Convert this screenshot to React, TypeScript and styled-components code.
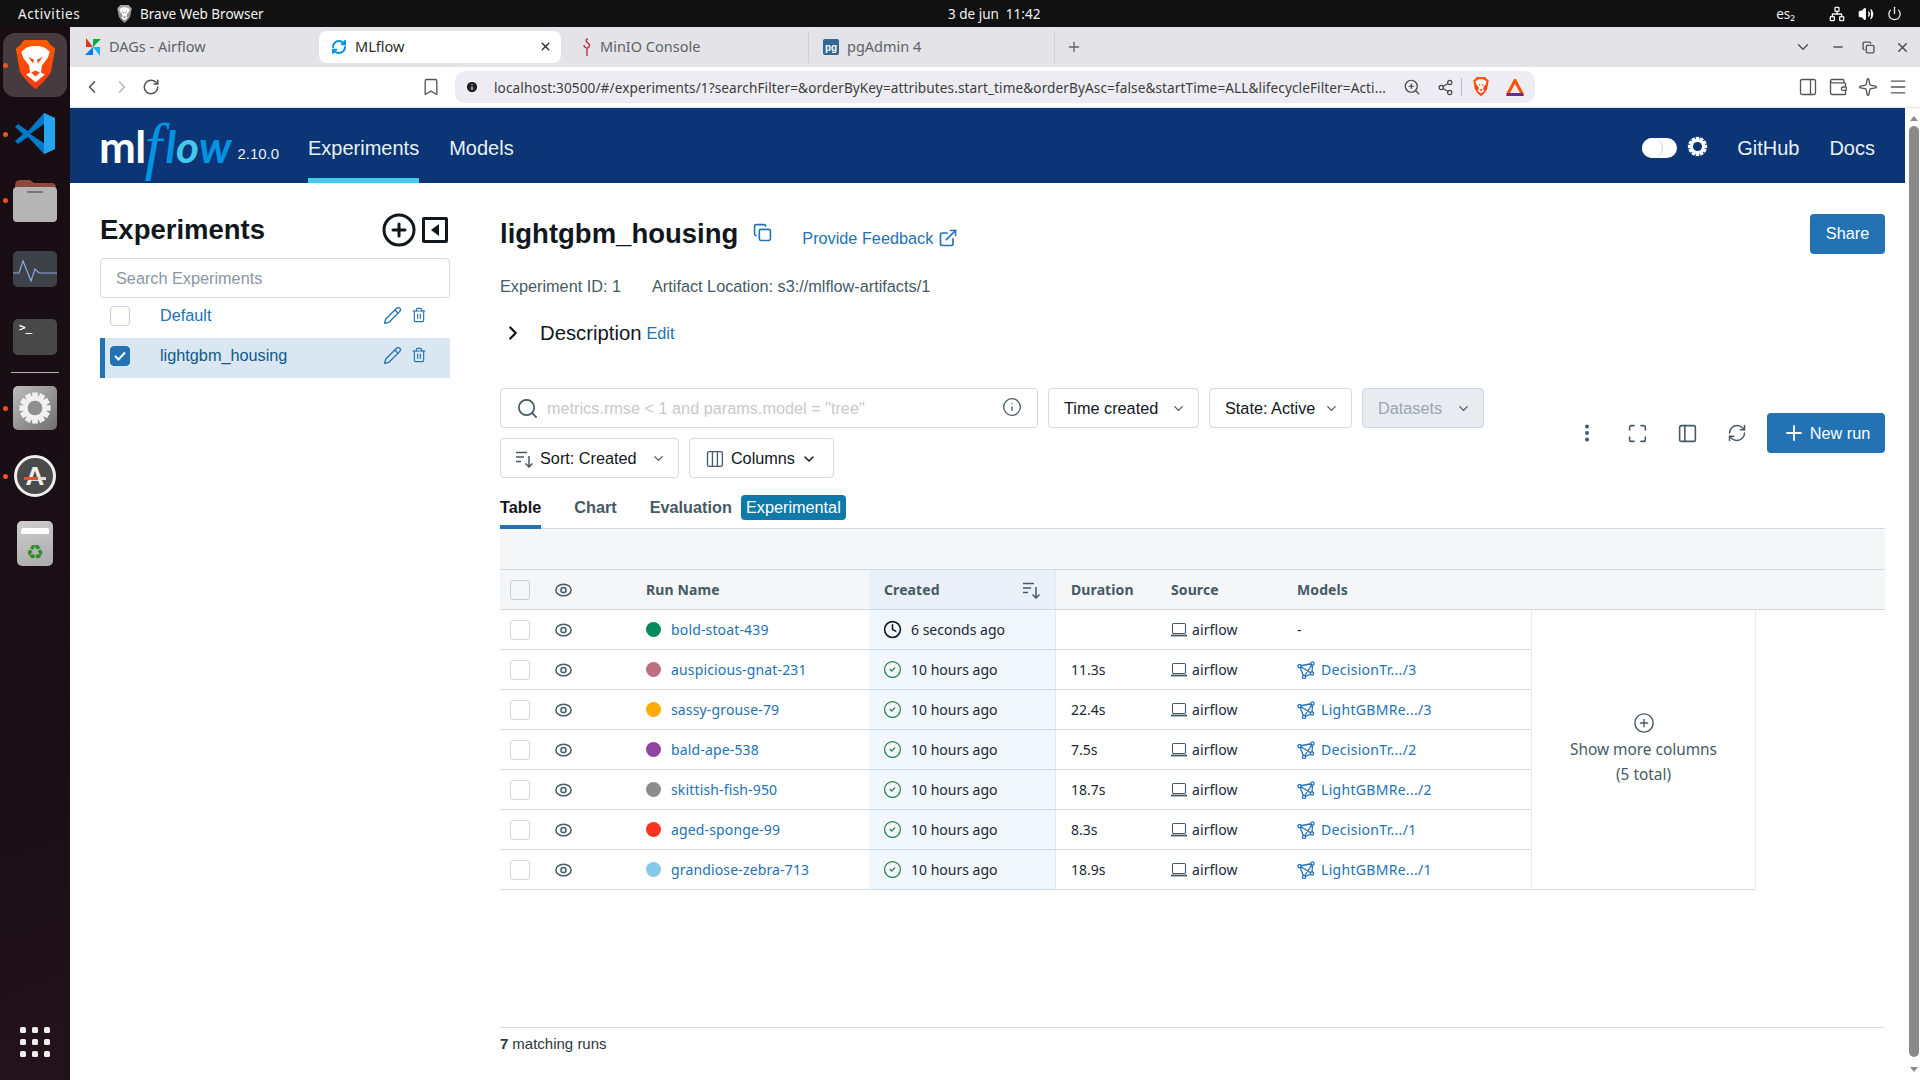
import React from 'react';
import styled, { createGlobalStyle } from 'styled-components';
import {
  ChevronLeft, ChevronRight, RotateCw, Bookmark, Search, Info, ChevronDown, Columns3, Clock, CircleCheck,
  Pencil, Trash2, CirclePlus, Maximize, PanelLeft, RefreshCw, Plus, EllipsisVertical, ExternalLink,
  Copy, ZoomIn, Share2, Menu, Wallet, Sparkle, PanelRight, Minus, X, Network, Volume2, Power,
} from 'lucide-react';

const UI = '"Liberation Sans", Arial, sans-serif';
const SHELL = '"Noto Sans", "Open Sans", sans-serif';

const Global = createGlobalStyle`
  html, body { margin: 0; padding: 0; background: #fff; overflow: hidden; }
  * { box-sizing: border-box; }
`;

const Screen = styled.div`
  width: 1920px; height: 1080px; display: flex; flex-direction: column; overflow: hidden; font-family: ${UI};
`;
const TopBar = styled.div`
  height: 27px; flex: none; background: #111; color: #f1f1f1; display: flex; align-items: center;
  font: 13.5px ${SHELL};
`;
const TopLeft = styled.div`width: 948px; display: flex; align-items: center; padding-left: 18px;`;
const Activities = styled.span`width: 99px; letter-spacing: 0.6px;`;
const AppName = styled.span`margin-left: 8px;`;
const TopRight = styled.div`margin-left: auto; display: flex; align-items: center; padding-right: 18px; svg { display: block; }`;
const Lang = styled.span`margin-right: 34px;`;
const TrayGap = styled.span`width: 13px;`;

const Desk = styled.div`flex: 1; display: flex; min-height: 0;`;
const Dock = styled.div`
  width: 70px; flex: none; display: flex; flex-direction: column; align-items: center; padding-top: 6px;
  background: linear-gradient(160deg, #170d13 0%, #1a0f15 70%, #24121b 100%);
`;
const DockSlot = styled.div<{ $mt: number; $h: number; $tile?: boolean; $dot?: boolean }>`
  position: relative; width: 64px; height: ${p => p.$h}px; margin-top: ${p => p.$mt}px;
  display: flex; align-items: center; justify-content: center; border-radius: 12px;
  background: ${p => (p.$tile ? '#463c40' : 'transparent')};
  &::before {
    content: ''; display: ${p => (p.$dot ? 'block' : 'none')}; position: absolute; left: 0; top: 50%;
    width: 5px; height: 5px; margin-top: -2px; border-radius: 50%; background: #e95420;
  }
`;
const DockSep = styled.div`width: 48px; height: 1px; background: #b8b4b6; margin-top: 17px;`;
const AppGrid = styled.div`
  margin-top: auto; margin-bottom: 23px; display: grid; grid-template-columns: repeat(3, 6px); gap: 6px;
  span { width: 6px; height: 6px; border-radius: 1.5px; background: #eee; }
`;
const TermTile = styled.div`
  width: 44px; height: 36px; border-radius: 5px; background: #484848; color: #fff; padding: 2px 0 0 6px;
  font: 700 11px "DejaVu Sans Mono", monospace;
`;

const Browser = styled.div`flex: 1; min-width: 0; display: flex; flex-direction: column;`;
const TabStrip = styled.div`height: 40px; flex: none; background: #e3e3e8; display: flex; align-items: center; color: #5f6368; font: 14.5px ${SHELL};`;
const TabGrid = styled.div`display: grid; grid-template-columns: 249px 242px 248px 246px;`;
const Tab = styled.div<{ $active?: boolean; $pad: number; $sep?: boolean }>`
  height: 32px; display: flex; align-items: center; padding-left: ${p => p.$pad}px; gap: 8px; position: relative;
  span { margin-top: -2px; }
  ${p => (p.$active ? 'background:#fff;border-radius:8px;color:#2b2b2b;' : '')}
  ${p => (p.$sep ? 'border-right:1px solid #cfcfd4;' : '')}
`;
const TabClose = styled.span`margin-left: auto; margin-right: 9px; display: flex; color: #333;`;
const PgIcon = styled.i`
  width: 16px; height: 16px; border-radius: 2px; background: #336791; color: #fff; font: 700 10px ${UI};
  display: flex; align-items: center; justify-content: center;
`;
const NewTab = styled.span`margin-left: 11px; display: flex; color: #666;`;
const WinButtons = styled.div`margin-left: auto; display: flex; align-items: center; color: #555; padding-right: 10px;`;
const WinBtn = styled.span<{ $ml: number }>`margin-left: ${p => p.$ml}px; display: flex;`;

const Toolbar = styled.div`
  height: 41px; flex: none; background: #fff; display: flex; align-items: center; padding-left: 12px;
  border-bottom: 1px solid #e4e4e4; color: #555;
  svg { display: block; }
`;
const IconGroup = styled.div<{ $ml?: number }>`display: flex; align-items: center; gap: 10px; margin-left: ${p => p.$ml ?? 0}px;`;
const UrlBox = styled.div`
  width: 1080px; height: 32px; margin-left: 14px; background: #edecf2; border-radius: 10px; display: flex; align-items: center;
  padding-left: 10px; color: #444;
`;
const UrlText = styled.span`
  width: 892px; margin-left: 15px; font: 13.6px ${SHELL}; color: #3c3c3c; white-space: nowrap; overflow: hidden; letter-spacing: 0.1px;
`;
const UrlIcon = styled.span<{ $ml: number }>`margin-left: ${p => p.$ml}px; display: flex;`;
const UrlSep = styled.span`width: 1px; height: 18px; background: #b9b9bd; margin-left: 7px;`;

const PageRow = styled.div`flex: 1; display: flex; min-height: 0;`;
const Content = styled.div`flex: 1; min-width: 0; display: flex; flex-direction: column;`;
const Header = styled.header`
  height: 75px; flex: none; background: #0b3574; display: flex; align-items: stretch; padding: 0 30px; color: #e6f1f5;
`;
const LogoBlock = styled.div`width: 208px; display: flex; align-items: center; color: #fff; margin-left: -1px; margin-right: 1px;`;
const LogoMl = styled.span`font: 700 44px Lato, sans-serif; letter-spacing: -0.6px; color: #fff; line-height: 1;`;
const LogoF = styled.span`font: italic 400 64px "Liberation Serif", serif; color: #0194e2; margin: 0 3px 0 -1px; line-height: 1;`;
const LogoRest = styled.span<{ $c: string }>`font: italic 700 44px Lato, sans-serif; color: ${p => p.$c}; line-height: 1;`;
const Version = styled.span`font: 15px ${UI}; margin: 15px 0 0 6px; color: #e8eef5;`;
const NavItem = styled.a<{ $active?: boolean }>`
  display: flex; align-items: center; font: 20px ${UI}; margin-right: 30px; padding-top: ${p => (p.$active ? '10px' : '5px')};
  border-bottom: ${p => (p.$active ? '5px solid #43c9ed' : 'none')};
`;
const HeaderRight = styled.div`margin-left: auto; display: flex; align-items: center; font: 20px ${UI}; padding-top: 5px;`;
const Toggle = styled.span`
  width: 35px; height: 20px; margin-top: -1px; border-radius: 10px; background: #fff; display: block; position: relative;
  &::after { content: ''; position: absolute; left: 0; top: 0; width: 20px; height: 20px; border-radius: 50%; background: #fff; border-right: 1px solid #c5d3e0; }
`;
const GearWrap = styled.span`display: flex; margin: -3px 29px 0 10px;`;
const HeaderLink = styled.a`margin-right: 30px; &:last-child { margin-right: 0; }`;

const Body = styled.div`flex: 1; min-height: 0; display: flex; padding: 31px 20px 0 30px;`;
const Sidebar = styled.aside`width: 350px; flex: none; margin-right: 50px;`;
const SideHead = styled.div`height: 32px; display: flex; align-items: center; color: #11171c;`;
const SideTitle = styled.h1`margin: 0; font: 700 27.5px ${UI};`;
const SideIcons = styled.div`margin-left: auto; margin-right: 2px; display: flex; align-items: center; gap: 5px;`;
const CollapseBox = styled.span`
  width: 26px; height: 26px; border: 3px solid #11171c; border-radius: 2px; display: flex; align-items: center; justify-content: center;
  &::after { content: ''; border: 6px solid transparent; border-left: 0; border-right: 8px solid #11171c; margin-left: -1px; }
`;
const SideSearch = styled.div`
  height: 40px; margin-top: 12px; border: 1px solid #d1d9e1; border-radius: 4px; display: flex; align-items: center; padding: 1px 0 0 15px;
  font: 16.25px ${UI}; color: #8a96a3;
`;
const ExpRow = styled.div<{ $sel?: boolean }>`
  height: 40px; display: flex; align-items: center; padding-left: ${p => (p.$sel ? '5px' : '10px')};
  ${p => (p.$sel ? 'background:#dae6f2;border-left:5px solid #2272b4;' : '')}
  color: ${p => (p.$sel ? '#0e5a8a' : '#2272b4')}; font: 16.25px ${UI};
`;
const SideCheck = styled.span<{ $on?: boolean }>`
  width: 20px; height: 20px; margin-top: -4px; border-radius: 4px; flex: none; display: flex; align-items: center; justify-content: center;
  border: 1px solid ${p => (p.$on ? '#2272b4' : '#c2ccd6')}; background: ${p => (p.$on ? '#2272b4' : '#fff')}; color: #fff;
`;
const ExpName = styled.span`margin-left: 30px; margin-top: -5px;`;
const ExpActions = styled.span`margin-left: auto; margin-right: 23px; margin-top: -6px; display: flex; align-items: center; gap: 9px; color: #2272b4;`;

const Main = styled.main`flex: 1; min-width: 0; display: flex; flex-direction: column;`;
const TitleRow = styled.div`height: 40px; display: flex; align-items: center;`;
const Title = styled.h2`margin: 0; font: 700 27.5px ${UI}; color: #11171c;`;
const CopyBtn = styled.span`margin: -4px 0 0 15px; color: #2272b4; display: flex;`;
const Feedback = styled.a`margin: 8px 0 0 30px; display: flex; align-items: center; gap: 5px; font: 16.25px ${UI}; color: #2272b4;`;
const ShareBtn = styled.button`
  margin-left: auto; width: 75px; height: 40px; margin-top: -1px; border: 0; border-radius: 4px; background: #2272b4; color: #fff; font: 16.25px ${UI};
`;
const Meta = styled.div`margin-top: 20px; height: 24px; display: flex; align-items: center; gap: 31px; font: 16.25px ${UI}; color: #465965;`;
const DescRow = styled.div`margin-top: 20px; height: 30px; display: flex; align-items: center; color: #11171c;`;
const DescChevron = styled.span`display: flex; margin-left: 2px; width: 38px;`;
const DescTitle = styled.span`font: 20.3px ${UI};`;
const DescEdit = styled.a`font: 16.25px ${UI}; color: #2272b4; margin-left: 5px;`;

const Controls = styled.div`margin-top: 40px; display: flex; align-items: center; justify-content: space-between;`;
const FilterCol = styled.div`display: flex; flex-direction: column; gap: 10px;`;
const FilterRow = styled.div`display: flex; gap: 10px;`;
const SearchBox = styled.div`
  width: 538px; height: 40px; border: 1px solid #d1d9e1; border-radius: 4px; display: flex; align-items: center; padding: 1px 15px 0 15px;
  font: 16.25px ${UI}; color: #c9c9c9; gap: 8px;
  svg { color: #465965; flex: none; }
`;
const InfoSlot = styled.span`margin-left: auto; display: flex; margin-top: -4px;`;
const Select = styled.div<{ $w: number; $off?: boolean; $pr?: number }>`
  width: ${p => p.$w}px; height: 40px; border: 1px solid #d1d9e1; border-radius: 4px; display: flex; align-items: center;
  padding: 1px ${p => p.$pr ?? 12}px 0 15px;
  font: 16.25px ${UI}; color: ${p => (p.$off ? '#9aa5b0' : '#11171c')}; background: ${p => (p.$off ? '#e8ebef' : '#fff')};
  gap: 6px; white-space: nowrap;
`;
const SelectChevron = styled.span`margin-left: auto; display: flex; color: #465965;`;
const Actions = styled.div`display: flex; align-items: center; color: #465965;`;
const ActionIcon = styled.span`width: 50px; display: flex; justify-content: center;`;
const NewRun = styled.button`
  width: 118px; height: 40px; margin-left: 5px; border: 0; border-radius: 4px; background: #2272b4; color: #fff; font: 16.25px ${UI};
  display: flex; align-items: center; justify-content: center; gap: 4px;
`;

const Tabs = styled.div`margin-top: 17px; height: 34px; flex: none; display: flex; align-items: flex-start; border-bottom: 1px solid #d1d9e1; font: 700 16.25px/25px ${UI}; color: #465965;`;
const TabLink = styled.span<{ $active?: boolean; $mr: number }>`
  display: block; height: 34px; margin-right: ${p => p.$mr}px;
  ${p => (p.$active ? 'color:#11171c;border-bottom:4px solid #2272b4;' : '')}
`;
const Badge = styled.span`
  width: 105px; height: 25px; border-radius: 4px; background: #0f7aaa; color: #fff; font: 16.25px ${UI};
  display: flex; align-items: center; justify-content: center;
`;
const GrayBar = styled.div`height: 41px; flex: none; background: #f5f6f8; border-bottom: 1px solid #d1d9e1;`;

const COLS = '55px 91px 223px 187px 100px 125px 250px';
const HeadRow = styled.div`
  height: 40px; flex: none; display: grid; grid-template-columns: ${COLS} 1fr; background: #f5f6f8; border-bottom: 1px solid #d1d9e1;
  font: 700 14px ${SHELL}; letter-spacing: 0.1px; color: #465965;
`;
const TableBody = styled.div`display: flex; flex: none;`;
const Rows = styled.div`width: 1032px; border-right: 1px solid #e4e9ee;`;
const DataRow = styled.div`
  height: 40px; display: grid; grid-template-columns: ${COLS}; border-bottom: 1px solid #d1d9e1; font: 14px ${SHELL}; color: #1b2733;
`;
const Cell = styled.div<{ $pl?: number; $sorted?: boolean; $head?: boolean }>`
  display: flex; align-items: center; padding-left: ${p => p.$pl ?? 0}px; gap: 10px; min-width: 0; white-space: nowrap;
  ${p => (p.$sorted ? `background:${p.$head ? '#e9f0f7' : '#f0f7fd'};border-right:1px solid #e4e9ee;` : '')}
`;
const StatusCell = styled(Cell)`gap: 9px;`;
const RowCheck = styled.span`width: 20px; height: 20px; flex: none; border: 1.5px solid #cfd8e1; border-radius: 3px; background: #fff;`;
const HeadCheck = styled(RowCheck)`background: #f5f6f8; border-color: #c3ced9;`;
const SortSlot = styled.span`margin-left: auto; margin-right: 14px; display: flex;`;
const RunDot = styled.span<{ $c: string }>`width: 15px; height: 15px; flex: none; border-radius: 50%; background: ${p => p.$c};`;
const RunLink = styled.a`color: #2272b4; letter-spacing: 0.15px;`;
const SourceCell = styled(Cell)`gap: 5px; letter-spacing: 0.1px;`;
const ModelCell = styled(Cell)`gap: 6px; color: #2272b4; letter-spacing: 0.3px;`;
const ShowMore = styled.div`
  width: 224px; border-right: 1px solid #e4e9ee; border-bottom: 1px solid #d1d9e1; display: flex; flex-direction: column; align-items: center; justify-content: center;
  font: 15.4px/25px ${SHELL}; color: #465965;
  svg { margin-bottom: 3px; }
`;
const Footer = styled.div`margin-top: auto; height: 53px; flex: none; padding-top: 6px; border-top: 1px solid #d1d9e1; display: flex; align-items: flex-start; font: 15px/20px ${UI}; color: #2c3640; b { margin-right: 4px; }`;

const ScrollBar = styled.div`
  width: 15px; flex: none; background: #fff; display: flex; flex-direction: column; align-items: center; padding-left: 2px; padding-top: 8px;
`;
const ArrowUp = styled.span`width: 0; height: 0; border: 4px solid transparent; border-top: 0; border-bottom: 5px solid #8a8a8a;`;
const ArrowDown = styled.span`width: 0; height: 0; border: 4px solid transparent; border-bottom: 0; border-top: 5px solid #8a8a8a; margin-bottom: 8px;`;
const Thumb = styled.span`width: 10px; flex: 1; margin: 5px 0 10px; background: #8a8a8a; border-radius: 5px;`;

/* ----- drawings ----- */
const Lion: React.FC<{ w: number; mono?: boolean }> = ({ w, mono }) => (
  <svg width={w} height={w * 1.2} viewBox="0 0 41 50">
    <defs>
      <linearGradient id={mono ? 'lm' : 'lc'} x1="0" y1="0" x2="0" y2="1">
        <stop offset="0" stopColor={mono ? '#aaa' : '#ff5a00'} />
        <stop offset="1" stopColor={mono ? '#888' : '#ff3a10'} />
      </linearGradient>
    </defs>
    <path d="M9 0H32L36 5 40.5 9 36.5 31Q35 37 20.5 50 6 37 4.5 31L.5 9 5 5Z" fill={`url(#${mono ? 'lm' : 'lc'})`} />
    <path d="M11 8 17 6H24L30 8 35 12 33 18 27 26 26 33 30 35 20.5 43 11 35 15 33 14 26 8 18 6 12Z" fill="#fff" />
    <path d="M13 17 19 20 18 24ZM28 17 22 20 23 24ZM16 33 20.5 31 25 33 20.5 37Z" fill={mono ? '#888' : '#ff4a10'} />
  </svg>
);
const VsCode = () => (
  <svg width="42" height="43" viewBox="0 0 42 43">
    <path d="M1 15 4 12 14 19 30 1 41 6V37L30 42 14 25 4 32 1 29 9 22Z" fill="#0078c8" />
    <path d="M30 1 41 6V37L30 42Z" fill="#25a5ee" />
    <path d="M30 12V31L16 22Z" fill="#170d13" />
  </svg>
);
const Folder = () => (
  <svg width="44" height="44" viewBox="0 0 44 44">
    <path d="M2 8Q2 2 7 2H17L21 5H39Q43 5 43 10V20H2Z" fill="#8b4a3c" />
    <rect x="0" y="9" width="44" height="35" rx="4" fill="#b5b5b5" />
    <rect x="14" y="13" width="16" height="2" fill="#777" />
  </svg>
);
const Monitor = () => (
  <svg width="44" height="36" viewBox="0 0 44 36">
    <rect width="44" height="36" rx="5" fill="#3d4249" />
    <path d="M0 22H6L10 10 18 30 22 18 26 22H44" stroke="#8fa9e0" strokeWidth="1.2" fill="none" />
  </svg>
);
const GearBadge: React.FC<{ size: number; bg: string; fg?: string }> = ({ size, bg, fg = '#fff' }) => {
  const teeth = Array.from({ length: 12 }, (_, i) => i * 30);
  return (
    <svg width={size} height={size} viewBox="0 0 24 24">
      {teeth.map(a => <rect key={a} x="10" y="1" width="4" height="5" fill={fg} transform={`rotate(${a} 12 12)`} />)}
      <circle cx="12" cy="12" r="8.5" fill={fg} />
      <circle cx="12" cy="12" r="5.2" fill={bg} />
    </svg>
  );
};
const SettingsTile = styled.div`
  width: 44px; height: 44px; border-radius: 5px; background: linear-gradient(135deg, #bdbdbd, #6f6f6f);
  display: flex; align-items: center; justify-content: center;
`;
const SoftwareDisc = styled.div`
  width: 42px; height: 42px; border-radius: 50%; background: #4a4a4a; border: 3px solid #eee; position: relative;
  color: #eee; font: 700 26px ${UI}; display: flex; align-items: center; justify-content: center;
  &::after { content: ''; position: absolute; left: 7px; right: 7px; top: 19px; height: 3px; background: linear-gradient(90deg, #e95420 65%, #ddd 65%); }
`;
const TrashTile = styled.div`
  width: 36px; height: 45px; border-radius: 5px; background: linear-gradient(160deg, #cfcfcf, #a9a9a9); color: #2e8b1f; font: 20px "DejaVu Sans", sans-serif;
  display: flex; flex-direction: column; align-items: center; justify-content: flex-end; padding-bottom: 4px; line-height: 1;
  &::before { content: ''; width: 28px; height: 6px; background: #fff; border-radius: 2px 2px 0 0; margin-bottom: 8px; }
`;
const AirflowIcon = () => (
  <svg width="16" height="18" viewBox="0 0 16 18">
    <path d="M8 9 1 0 1 9Z" fill="#e43921" /><path d="M8 9 16 1 8 1Z" fill="#00ad46" />
    <path d="M8 9 15 18 15 9Z" fill="#0cb6ff" /><path d="M8 9 0 17 8 17Z" fill="#017cee" />
  </svg>
);
const MinioIcon = () => (
  <svg width="10" height="18" viewBox="0 0 10 18" fill="none" stroke="#c72e49" strokeWidth="1.4">
    <path d="M6 1C3 1 4 4 6 5 9 7 7 10 5 10M5 10V18M5 10C3 10 2 8 2 7" />
  </svg>
);
const BatIcon = () => (
  <svg width="18" height="17" viewBox="0 0 18 17">
    <path d="M9 1.5 16.5 15.5H1.5Z" fill="none" stroke="#ff5000" strokeWidth="3" />
    <path d="M1 15.5H17" stroke="#662d91" strokeWidth="3" />
  </svg>
);
const SortIcon: React.FC<{ size?: number }> = ({ size = 18 }) => (
  <svg width={size} height={size} viewBox="0 0 18 18" fill="none" stroke="#465965" strokeWidth="1.5">
    <path d="M0 2.5H11M0 7H8M0 11.5H5M13 6V17M9.5 13.5 13 17 16.5 13.5" />
  </svg>
);
const EyeIcon = () => (
  <svg width="17" height="14" viewBox="0 0 17 14" fill="none" stroke="#465965" strokeWidth="1.5">
    <ellipse cx="8.5" cy="7" rx="7.6" ry="5.8" />
    <circle cx="8.5" cy="7" r="2.6" />
  </svg>
);
const ModelIcon = () => (
  <svg width="18" height="18" viewBox="0 0 18 18" fill="none" stroke="#2272b4" strokeWidth="1.3">
    <path d="M2.5 5 15.5 2.5 15 12.5 7 16ZM2.5 5 15 12.5M15.5 2.5 7 16M2.5 5 15.5 2.5" />
    <circle cx="2.5" cy="5" r="1.6" fill="#fff" /><circle cx="15.5" cy="2.5" r="1.6" fill="#fff" />
    <circle cx="15" cy="12.5" r="1.6" fill="#fff" /><circle cx="7" cy="16" r="1.6" fill="#fff" />
  </svg>
);
const LaptopIcon = () => (
  <svg width="16" height="15" viewBox="0 0 16 15" fill="none" stroke="#465965">
    <rect x="1.5" y="1.5" width="13" height="10" rx="1.2" strokeWidth="1.1" />
    <path d="M0 13.5H16" strokeWidth="1.8" />
  </svg>
);
const CheckMark = () => (
  <svg width="12" height="10" viewBox="0 0 12 10" fill="none" stroke="#fff" strokeWidth="2"><path d="M1 5 4.5 8.5 11 1.5" /></svg>
);

const RUNS = [
  { name: 'bold-stoat-439', color: '#018a5d', time: '6 seconds ago', dur: '', model: '', running: true },
  { name: 'auspicious-gnat-231', color: '#bb6f80', time: '10 hours ago', dur: '11.3s', model: 'DecisionTr.../3' },
  { name: 'sassy-grouse-79', color: '#ffab00', time: '10 hours ago', dur: '22.4s', model: 'LightGBMRe.../3' },
  { name: 'bald-ape-538', color: '#8e44a0', time: '10 hours ago', dur: '7.5s', model: 'DecisionTr.../2' },
  { name: 'skittish-fish-950', color: '#8c8c8c', time: '10 hours ago', dur: '18.7s', model: 'LightGBMRe.../2' },
  { name: 'aged-sponge-99', color: '#ff3322', time: '10 hours ago', dur: '8.3s', model: 'DecisionTr.../1' },
  { name: 'grandiose-zebra-713', color: '#87c9e8', time: '10 hours ago', dur: '18.9s', model: 'LightGBMRe.../1' },
];

export default function App() {
  return (
    <Screen>
      <Global />
      <TopBar>
        <TopLeft>
          <Activities>Activities</Activities>
          <Lion w={15} mono />
          <AppName>Brave Web Browser</AppName>
        </TopLeft>
        <span>3 de jun&nbsp;&nbsp;11:42</span>
        <TopRight>
          <Lang>es₂</Lang>
          <Network size={16} />
          <TrayGap />
          <Volume2 size={16} fill="#fff" />
          <TrayGap />
          <Power size={15} />
        </TopRight>
      </TopBar>
      <Desk>
        <Dock>
          <DockSlot $mt={0} $h={64} $tile $dot><Lion w={41} /></DockSlot>
          <DockSlot $mt={15} $h={43} $dot><VsCode /></DockSlot>
          <DockSlot $mt={23} $h={44} $dot><Folder /></DockSlot>
          <DockSlot $mt={29} $h={36}><Monitor /></DockSlot>
          <DockSlot $mt={32} $h={36}><TermTile>&gt;_</TermTile></DockSlot>
          <DockSep />
          <DockSlot $mt={13} $h={44} $dot><SettingsTile><GearBadge size={34} bg="#8f8f8f" fg="#f0f0f0" /></SettingsTile></DockSlot>
          <DockSlot $mt={25} $h={42} $dot><SoftwareDisc>A</SoftwareDisc></DockSlot>
          <DockSlot $mt={24} $h={45}><TrashTile>♻</TrashTile></DockSlot>
          <AppGrid>{Array.from({ length: 9 }, (_, i) => <span key={i} />)}</AppGrid>
        </Dock>
        <Browser>
          <TabStrip>
            <TabGrid>
              <Tab $pad={15}><AirflowIcon /><span>DAGs - Airflow</span></Tab>
              <Tab $pad={12} $active>
                <RefreshCw size={16} color="#0194e2" strokeWidth={3} />
                <span>MLflow</span>
                <TabClose><X size={13} strokeWidth={2.5} /></TabClose>
              </Tab>
              <Tab $pad={21} $sep><MinioIcon /><span>MinIO Console</span></Tab>
              <Tab $pad={14} $sep><PgIcon>pg</PgIcon><span>pgAdmin 4</span></Tab>
            </TabGrid>
            <NewTab><Plus size={16} /></NewTab>
            <WinButtons>
              <ChevronDown size={18} />
              <WinBtn $ml={19}><Minus size={14} strokeWidth={2.5} /></WinBtn>
              <WinBtn $ml={17}><Copy size={13} strokeWidth={2.5} /></WinBtn>
              <WinBtn $ml={20}><X size={15} strokeWidth={2.5} /></WinBtn>
            </WinButtons>
          </TabStrip>
          <Toolbar>
            <IconGroup>
              <ChevronLeft size={20} />
              <ChevronRight size={20} color="#b8b8b8" />
              <RotateCw size={18} />
            </IconGroup>
            <IconGroup $ml={261}><Bookmark size={20} strokeWidth={1.6} /></IconGroup>
            <UrlBox>
              <Info size={14} fill="#222" color="#fff" />
              <UrlText>localhost:30500/#/experiments/1?searchFilter=&amp;orderByKey=attributes.start_time&amp;orderByAsc=false&amp;startTime=ALL&amp;lifecycleFilter=Acti...</UrlText>
              <UrlIcon $ml={17}><ZoomIn size={18} strokeWidth={1.6} /></UrlIcon>
              <UrlIcon $ml={16}><Share2 size={17} strokeWidth={1.6} /></UrlIcon>
              <UrlSep />
              <UrlIcon $ml={11}><Lion w={16} /></UrlIcon>
              <UrlIcon $ml={17}><BatIcon /></UrlIcon>
            </UrlBox>
            <IconGroup $ml={263}>
              <PanelRight size={20} strokeWidth={1.6} />
              <Wallet size={20} strokeWidth={1.6} />
              <Sparkle size={20} strokeWidth={1.6} />
              <Menu size={20} strokeWidth={1.6} />
            </IconGroup>
          </Toolbar>
          <PageRow>
            <Content>
              <Header>
                <LogoBlock>
                  <LogoMl>ml</LogoMl>
                  <LogoF>f</LogoF>
                  <LogoRest $c="#0194e2">l</LogoRest>
                  <LogoRest $c="#43c9ed">o</LogoRest>
                  <LogoRest $c="#0194e2">w</LogoRest>
                  <Version>2.10.0</Version>
                </LogoBlock>
                <NavItem $active>Experiments</NavItem>
                <NavItem>Models</NavItem>
                <HeaderRight>
                  <Toggle />
                  <GearWrap><GearBadge size={21} bg="#0b3574" /></GearWrap>
                  <HeaderLink>GitHub</HeaderLink>
                  <HeaderLink>Docs</HeaderLink>
                </HeaderRight>
              </Header>
              <Body>
                <Sidebar>
                  <SideHead>
                    <SideTitle>Experiments</SideTitle>
                    <SideIcons>
                      <CirclePlus size={36} strokeWidth={2} />
                      <CollapseBox />
                    </SideIcons>
                  </SideHead>
                  <SideSearch>Search Experiments</SideSearch>
                  <ExpRow>
                    <SideCheck />
                    <ExpName>Default</ExpName>
                    <ExpActions><Pencil size={19} strokeWidth={1.7} /><Trash2 size={16} strokeWidth={1.7} /></ExpActions>
                  </ExpRow>
                  <ExpRow $sel>
                    <SideCheck $on><CheckMark /></SideCheck>
                    <ExpName>lightgbm_housing</ExpName>
                    <ExpActions><Pencil size={19} strokeWidth={1.7} /><Trash2 size={16} strokeWidth={1.7} /></ExpActions>
                  </ExpRow>
                </Sidebar>
                <Main>
                  <TitleRow>
                    <Title>lightgbm_housing</Title>
                    <CopyBtn><Copy size={19} strokeWidth={2} /></CopyBtn>
                    <Feedback>Provide Feedback <ExternalLink size={20} strokeWidth={2} /></Feedback>
                    <ShareBtn>Share</ShareBtn>
                  </TitleRow>
                  <Meta><span>Experiment ID: 1</span><span>Artifact Location: s3://mlflow-artifacts/1</span></Meta>
                  <DescRow>
                    <DescChevron><ChevronRight size={22} strokeWidth={2.5} /></DescChevron>
                    <DescTitle>Description</DescTitle>
                    <DescEdit>Edit</DescEdit>
                  </DescRow>
                  <Controls>
                    <FilterCol>
                      <FilterRow>
                        <SearchBox>
                          <Search size={23} strokeWidth={1.8} />
                          <span>metrics.rmse &lt; 1 and params.model = "tree"</span>
                          <InfoSlot><Info size={20} strokeWidth={1.6} /></InfoSlot>
                        </SearchBox>
                        <Select $w={151}>Time created<SelectChevron><ChevronDown size={15} /></SelectChevron></Select>
                        <Select $w={143}>State: Active<SelectChevron><ChevronDown size={15} /></SelectChevron></Select>
                        <Select $w={122} $off>Datasets<SelectChevron><ChevronDown size={15} /></SelectChevron></Select>
                      </FilterRow>
                      <FilterRow>
                        <Select $w={179}><SortIcon />Sort: Created<SelectChevron><ChevronDown size={15} /></SelectChevron></Select>
                        <Select $w={145} $pr={16}><Columns3 size={20} strokeWidth={1.6} color="#465965" />Columns<SelectChevron><ChevronDown size={16} strokeWidth={2.2} color="#11171c" /></SelectChevron></Select>
                      </FilterRow>
                    </FilterCol>
                    <Actions>
                      <ActionIcon><EllipsisVertical size={22} strokeWidth={2.4} /></ActionIcon>
                      <ActionIcon><Maximize size={21} strokeWidth={1.8} /></ActionIcon>
                      <ActionIcon><PanelLeft size={21} strokeWidth={1.8} /></ActionIcon>
                      <ActionIcon><RefreshCw size={20} strokeWidth={1.8} /></ActionIcon>
                      <NewRun><Plus size={24} strokeWidth={1.8} />New run</NewRun>
                    </Actions>
                  </Controls>
                  <Tabs>
                    <TabLink $active $mr={33}>Table</TabLink>
                    <TabLink $mr={33}>Chart</TabLink>
                    <TabLink $mr={9}>Evaluation</TabLink>
                    <TabLink $mr={0}><Badge>Experimental</Badge></TabLink>
                  </Tabs>
                  <GrayBar />
                  <HeadRow>
                    <Cell $pl={10}><HeadCheck /></Cell>
                    <Cell><EyeIcon /></Cell>
                    <Cell>Run Name</Cell>
                    <Cell $pl={15} $sorted $head>Created<SortSlot><SortIcon /></SortSlot></Cell>
                    <Cell $pl={15}>Duration</Cell>
                    <Cell $pl={15}>Source</Cell>
                    <Cell $pl={16}>Models</Cell>
                    <Cell />
                  </HeadRow>
                  <TableBody>
                    <Rows>
                      {RUNS.map(r => (
                        <DataRow key={r.name}>
                          <Cell $pl={10}><RowCheck /></Cell>
                          <Cell><EyeIcon /></Cell>
                          <Cell><RunDot $c={r.color} /><RunLink>{r.name}</RunLink></Cell>
                          <StatusCell $pl={14} $sorted>
                            {r.running ? <Clock size={19} color="#11171c" /> : <CircleCheck size={19} color="#277c43" strokeWidth={1.6} />}
                            {r.time}
                          </StatusCell>
                          <Cell $pl={15}>{r.dur}</Cell>
                          <SourceCell $pl={15}><LaptopIcon />airflow</SourceCell>
                          {r.model
                            ? <ModelCell $pl={16}><ModelIcon />{r.model}</ModelCell>
                            : <Cell $pl={16}>-</Cell>}
                        </DataRow>
                      ))}
                    </Rows>
                    <ShowMore>
                      <CirclePlus size={22} strokeWidth={1.5} />
                      <span>Show more columns</span>
                      <span>(5 total)</span>
                    </ShowMore>
                  </TableBody>
                  <Footer><b>7</b> matching runs</Footer>
                </Main>
              </Body>
            </Content>
            <ScrollBar>
              <ArrowUp />
              <Thumb />
              <ArrowDown />
            </ScrollBar>
          </PageRow>
        </Browser>
      </Desk>
    </Screen>
  );
}
